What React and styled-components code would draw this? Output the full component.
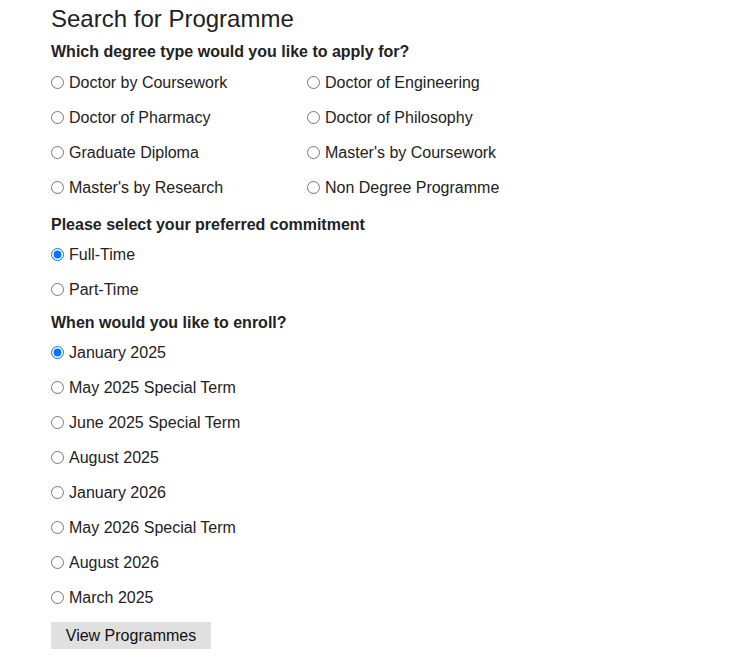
import React from 'react';
import styled, { createGlobalStyle } from 'styled-components';

const GlobalStyle = createGlobalStyle`
  body {
    margin: 0;
    background: #ffffff;
    font-family: Arial, "Liberation Sans", sans-serif;
    color: #222222;
  }
`;

const Page = styled.form`
  padding: 5px 0 0 51px;
`;

const Title = styled.h1`
  margin: 0 0 9px;
  font-size: 24px;
  font-weight: 400;
  line-height: 28px;
  color: #222222;
`;

const Heading = styled.div`
  margin-top: ${(p) => p.$top || 0}px;
  margin-bottom: ${(p) => p.$bottom || 0}px;
  font-size: 16px;
  font-weight: 700;
  line-height: 20px;
`;

const Grid = styled.div`
  display: grid;
  grid-template-columns: ${(p) => (p.$cols === 2 ? '256px 256px' : '256px')};
`;

const Option = styled.label`
  display: flex;
  align-items: center;
  height: 35px;
  font-size: 16px;
  line-height: 19px;
  cursor: pointer;

  input {
    width: 13px;
    height: 13px;
    margin: 0 5px 0 0;
  }
`;

const Button = styled.button`
  margin-top: 7.5px;
  width: 160px;
  height: 27px;
  padding: 0;
  border: none;
  background: #e0e0e0;
  color: #111111;
  font-family: Arial, "Liberation Sans", sans-serif;
  font-size: 16px;
  cursor: pointer;
`;

const degrees = [
  'Doctor by Coursework',
  'Doctor of Engineering',
  'Doctor of Pharmacy',
  'Doctor of Philosophy',
  'Graduate Diploma',
  "Master's by Coursework",
  "Master's by Research",
  'Non Degree Programme',
];

const commitments = ['Full-Time', 'Part-Time'];

const intakes = [
  'January 2025',
  'May 2025 Special Term',
  'June 2025 Special Term',
  'August 2025',
  'January 2026',
  'May 2026 Special Term',
  'August 2026',
  'March 2025',
];

const RadioGroup = ({ name, items, cols, checked }) => (
  <Grid $cols={cols}>
    {items.map((item) => (
      <Option key={item}>
        <input type="radio" name={name} value={item} defaultChecked={item === checked} />
        {item}
      </Option>
    ))}
  </Grid>
);

const App = () => {
  return (
    <>
      <GlobalStyle />
      <Page onSubmit={(e) => e.preventDefault()}>
        <Title>Search for Programme</Title>
        <Heading $bottom={2.5}>Which degree type would you like to apply for?</Heading>
        <RadioGroup name="degree" items={degrees} cols={2} />
        <Heading $top={10.5} $bottom={1.5}>Please select your preferred commitment</Heading>
        <RadioGroup name="commitment" items={commitments} checked="Full-Time" />
        <Heading $top={6.5} $bottom={1.5}>When would you like to enroll?</Heading>
        <RadioGroup name="intake" items={intakes} checked="January 2025" />
        <Button type="submit">View Programmes</Button>
      </Page>
    </>
  );
};

export default App;
